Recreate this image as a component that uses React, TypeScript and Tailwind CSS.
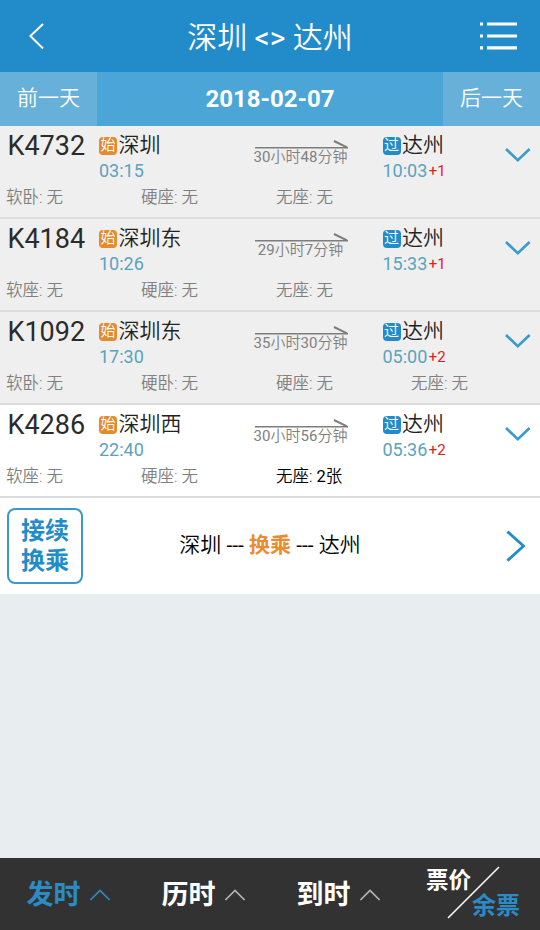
type Seat = { name: string; left: string }

type Train = {
  no: string
  from: string
  depart: string
  to: string
  arrive: string
  days: string
  duration: string
  seats: Seat[]
  available?: boolean
}

const trains: Train[] = [
  {
    no: 'K4732',
    from: '深圳',
    depart: '03:15',
    to: '达州',
    arrive: '10:03',
    days: '+1',
    duration: '30小时48分钟',
    seats: [
      { name: '软卧', left: '无' },
      { name: '硬座', left: '无' },
      { name: '无座', left: '无' },
    ],
  },
  {
    no: 'K4184',
    from: '深圳东',
    depart: '10:26',
    to: '达州',
    arrive: '15:33',
    days: '+1',
    duration: '29小时7分钟',
    seats: [
      { name: '软座', left: '无' },
      { name: '硬座', left: '无' },
      { name: '无座', left: '无' },
    ],
  },
  {
    no: 'K1092',
    from: '深圳东',
    depart: '17:30',
    to: '达州',
    arrive: '05:00',
    days: '+2',
    duration: '35小时30分钟',
    seats: [
      { name: '软卧', left: '无' },
      { name: '硬卧', left: '无' },
      { name: '硬座', left: '无' },
      { name: '无座', left: '无' },
    ],
  },
  {
    no: 'K4286',
    from: '深圳西',
    depart: '22:40',
    to: '达州',
    arrive: '05:36',
    days: '+2',
    duration: '30小时56分钟',
    seats: [
      { name: '软座', left: '无' },
      { name: '硬座', left: '无' },
      { name: '无座', left: '2张' },
    ],
    available: true,
  },
]

const sorts = [
  { label: '发时', active: true },
  { label: '历时', active: false },
  { label: '到时', active: false },
]

// digits keep the regular weight, the characters around them are lighter
function Mixed({ text }: { text: string }) {
  return (
    <>
      {text.split(/(\d+)/).map((part, i) => (
        <span key={i} className={/\d/.test(part) ? 'font-normal' : 'font-[350]'}>
          {part}
        </span>
      ))}
    </>
  )
}

function Header() {
  return (
    <header className="flex h-[72px] items-center bg-[#228bc9] text-white">
      <button className="flex w-[120px] pl-[28px]">
        <svg width="18" height="28" viewBox="0 0 18 28" fill="none" stroke="currentColor" strokeWidth="2">
          <path d="M15 2 L2.4 14 L15 26.5" />
        </svg>
      </button>
      <h1 className="flex-1 pt-[3px] text-center text-[30px] leading-9 font-[350]">
        深圳 <span className="font-normal">&lt;&gt;</span> 达州
      </h1>
      <button className="flex w-[120px] justify-end pr-[23px]">
        <svg width="37" height="28" viewBox="0 0 37 28" fill="currentColor">
          <path d="M0 .4h3v3.2H0z M7 .4h30v3.2H7z M0 12.4h3v3.2H0z M7 12.4h30v3.2H7z M0 24.2h3v3.2H0z M7 24.2h30v3.2H7z" />
        </svg>
      </button>
    </header>
  )
}

function DateBar() {
  return (
    <div className="flex h-[54px] items-center bg-[#4ba6d7] text-white">
      <button className="h-full w-[97px] bg-[#66b0d9] text-[21px] font-[350]">前一天</button>
      <div className="flex-1 text-center text-2xl font-bold">2018-02-07</div>
      <button className="h-full w-[97px] bg-[#66b0d9] text-[21px] font-[350]">后一天</button>
    </div>
  )
}

function Station({ tag, tagClass, name, time, days }: { tag: string; tagClass: string; name: string; time: string; days?: string }) {
  return (
    <div>
      <div className="flex h-[30px] items-center">
        <span className={`mt-px mr-[1.5px] flex size-[18px] items-center justify-center rounded-[4px] pb-px text-[15px] leading-none font-[350] text-white ${tagClass}`}>
          {tag}
        </span>
        <span className="text-[21px] leading-[30px] font-[350] text-[#222]">{name}</span>
      </div>
      <div className="flex h-[22px] items-center text-lg leading-[22px] text-[#5ba3bd]">
        {time}
        {days && <span className="ml-[1.5px] text-[15px] text-[#e02020]">{days}</span>}
      </div>
    </div>
  )
}

function TrainRow({ train }: { train: Train }) {
  return (
    <li className={`h-[93px] border-b-2 border-[#dcdcdc] ${train.available ? 'bg-white' : 'bg-[#efefef]'}`}>
      <div className="flex h-[59px] pt-[4px]">
        <div className="w-[99px] pt-px pl-[7.5px] text-[27px] leading-[31px] text-[#2b2b2b]">{train.no}</div>
        <div className="w-[153px]">
          <Station tag="始" tagClass="bg-[#e38b30]" name={train.from} time={train.depart} />
        </div>
        <div className="flex w-[97px] flex-col items-center pt-[10px]">
          <svg className="ml-[2px]" width="94" height="9" viewBox="0 0 94 9" fill="none" stroke="#7d7d7d">
            <path d="M0 7.7H93" strokeWidth="1.6" />
            <path d="M79 1 L92 7.4" strokeWidth="2" />
          </svg>
          <span className="text-[15px] leading-[17px] whitespace-nowrap text-[#808080]">
            <Mixed text={train.duration} />
          </span>
        </div>
        <div className="ml-[33.5px] w-[122.5px]">
          <Station tag="过" tagClass="bg-[#228bc9]" name={train.to} time={train.arrive} days={train.days} />
        </div>
        <svg className="mt-[17px]" width="26" height="16" viewBox="0 0 26 16" fill="none" stroke="#3b9ccb" strokeWidth="2.6">
          <path d="M1 2 L12.8 13.3 L24.6 2" />
        </svg>
      </div>
      <div className="grid grid-cols-4 text-[16.5px] leading-[26px]">
        {train.seats.map((seat) => (
          <span key={seat.name} className={`pl-[6px] whitespace-nowrap ${seat.left === '无' ? 'text-[#808080]' : 'text-black'}`}>
            <Mixed text={`${seat.name}: ${seat.left}`} />
          </span>
        ))}
      </div>
    </li>
  )
}

function Transfer() {
  return (
    <div className="flex h-[96px] items-center bg-white">
      <div className="ml-[7px] flex size-[76px] flex-col items-center justify-center rounded-[8px] border-2 border-[#3a98cf] text-2xl leading-[30px] font-bold text-[#228bc9]">
        <span>接续</span>
        <span>换乘</span>
      </div>
      <div className="flex-1 text-center text-[21px] font-[350] text-black">
        深圳 <span className="font-normal">---</span> <span className="font-bold text-[#ea8b2e]">换乘</span>{' '}
        <span className="font-normal">---</span> 达州
      </div>
      <div className="flex w-[83px] justify-end pr-[14px]">
        <svg width="20" height="32" viewBox="0 0 20 32" fill="none" stroke="#228bc9" strokeWidth="2.8">
          <path d="M1.4 1.6 L17.5 16 L1.4 30.6" />
        </svg>
      </div>
    </div>
  )
}

function Footer() {
  return (
    <footer className="flex h-[72px] bg-[#323232]">
      {sorts.map((sort) => (
        <button
          key={sort.label}
          className={`flex w-[135px] items-center pl-[26.5px] text-[27px] font-bold ${sort.active ? 'text-[#2c8bc4]' : 'text-white'}`}
        >
          <span className="pt-[2px]">{sort.label}</span>
          <svg
            className={`mt-[2px] ml-[8.5px] ${sort.active ? 'text-[#2c8bc4]' : 'text-[#b5b5b5]'}`}
            width="22"
            height="12"
            viewBox="0 0 22 12"
            fill="none"
            stroke="currentColor"
            strokeWidth="1.7"
          >
            <path d="M1.4 11 L11 1.4 L20.6 11" />
          </svg>
        </button>
      ))}
      <div className="relative flex w-[135px] flex-col font-bold">
        <span className="mt-[7px] ml-[21px] text-[22.5px] leading-[30px] text-white">票价</span>
        <span className="-mt-[4px] ml-[67px] text-2xl leading-[30px] text-[#2c8bc4]">余票</span>
        <svg className="absolute top-[8px] left-[42px]" width="53" height="53" viewBox="0 0 53 53" stroke="#fff" strokeWidth="1.6">
          <path d="M1 52 L52 1" />
        </svg>
      </div>
    </footer>
  )
}

export default function App() {
  return (
    <div className="flex h-[930px] w-[540px] flex-col overflow-hidden bg-[#e8eef0] font-['Roboto','Noto_Sans_CJK_SC',sans-serif]">
      <Header />
      <DateBar />
      <ul>
        {trains.map((train) => (
          <TrainRow key={train.no} train={train} />
        ))}
      </ul>
      <Transfer />
      <div className="flex-1" />
      <Footer />
    </div>
  )
}
